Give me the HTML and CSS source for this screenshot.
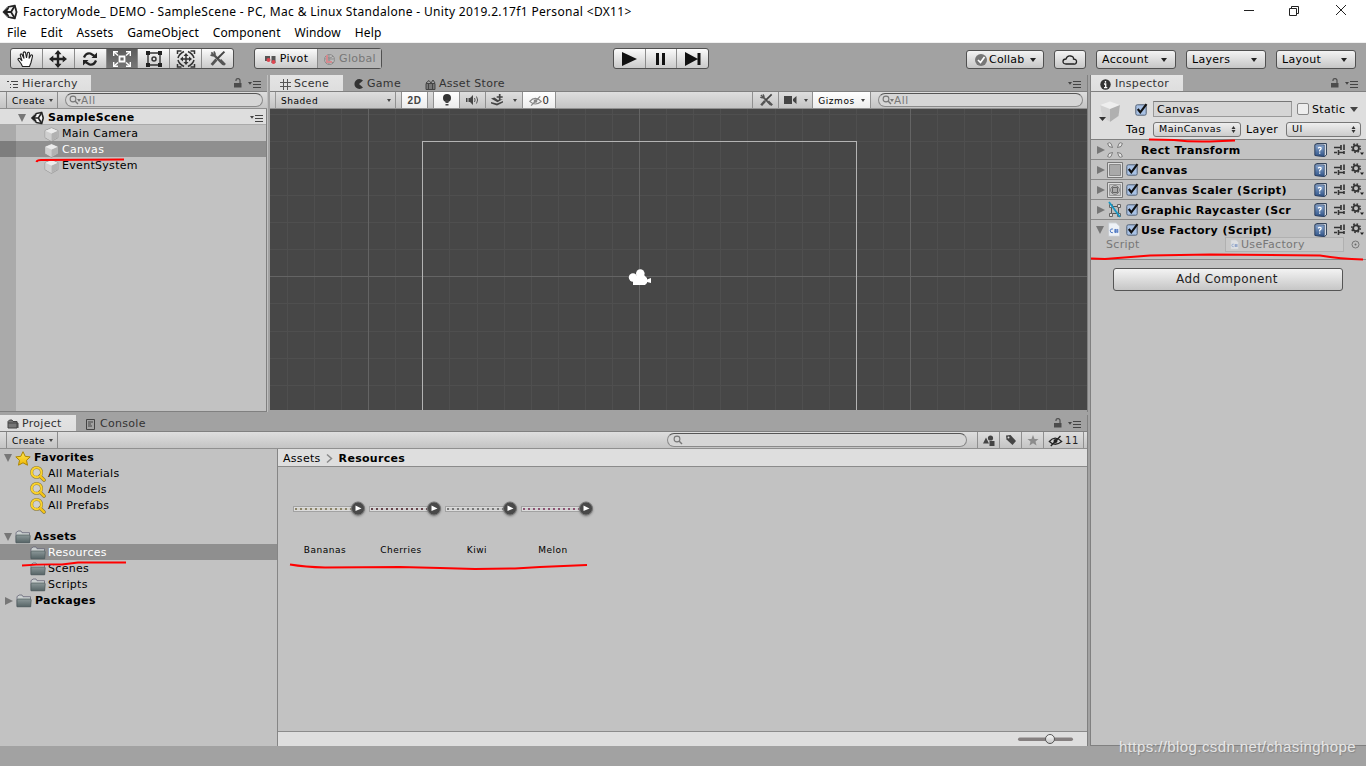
FILE: index.html
```html
<!DOCTYPE html>
<html lang="en">
<head>
<meta charset="utf-8">
<title>FactoryMode_ DEMO - SampleScene</title>
<link rel="stylesheet" href="styles.css">
</head>
<body>

<!-- shared icons -->
<svg class="sprite">
  <defs>
    <linearGradient id="yellow" x2="0" y2="1"><stop stop-color="#ffea58"/><stop offset="1" stop-color="#f0b500"/></linearGradient>
    <linearGradient id="slate" x2="0" y2="1"><stop stop-color="#8c9899"/><stop offset="1" stop-color="#566466"/></linearGradient>
    <linearGradient id="blue" x2="0" y2="1"><stop stop-color="#8aa7cf"/><stop offset="1" stop-color="#2f5387"/></linearGradient>
    <linearGradient id="knob" x2="0" y2="1"><stop stop-color="#fafafa"/><stop offset="1" stop-color="#c4c4c4"/></linearGradient>
  </defs>
  <symbol id="unity" viewBox="0 0 16 16"><path d="M1 8 5 3 13 1 15 8 13 15 5 13z" fill="#f4f4f4" stroke="#555" stroke-width=".6"/><path d="M6 3 12.800 1.700 14.500 8 12.800 14.300 6 13" fill="none" stroke="#222" stroke-width="1.700"/><path d="M3.500 8H9L12.500 2.300M9 8 12.500 13.700" fill="none" stroke="#222" stroke-width="1.800"/><path d="M.5 8 6.500 2.500 7 4.500 4.700 8 7 11.500 6.500 13.500z" fill="#222"/></symbol>
  <symbol id="cube" viewBox="0 0 14 14"><path d="M7 .8 13 3.3V10L7 13.4 1 10V3.3z" fill="#d9d9d9" stroke="#8f8f8f" stroke-width=".7"/><path d="M1.3 3.5 7 6V13L1.3 9.8z" fill="#cfcfcf"/><path d="M7 6 12.7 3.5V9.8L7 13z" fill="#b2b2b2"/><path d="M1.3 3.5 7 6 12.7 3.5 7 1.2z" fill="#ececec"/></symbol>
  <symbol id="lock" viewBox="0 0 8 10"><path d="M0 5h7.5v4.5H0z" fill="#4c4c4c"/><path d="M2 3V2Q2 .7 4 .7T6 2.4V5" fill="none" stroke="#4c4c4c" stroke-width="1.2"/></symbol>
  <symbol id="menu" viewBox="0 0 13 8"><path d="M0 2h4L2 4.7z" fill="#444"/><path d="M5 1.5h8M5 4.5h8M5 7.5h8" stroke="#444"/></symbol>
  <symbol id="glass" viewBox="0 0 12 10"><circle cx="4" cy="4" r="2.9" fill="none" stroke="#777" stroke-width="1.1"/><path d="M6 6 9 9" stroke="#777" stroke-width="1.4"/></symbol>
  <symbol id="find" viewBox="0 0 16 16"><circle cx="6.6" cy="6.4" r="4.9" fill="#ddd" fill-opacity=".5" stroke="#8a7838" stroke-width="3"/><path d="M10 10 14 14" stroke="#8a7838" stroke-width="3.6" stroke-linecap="round"/><circle cx="6.6" cy="6.4" r="4.9" fill="none" stroke="#fbd32c" stroke-width="2.1"/><path d="M10 10 14 14" stroke="#f6c517" stroke-width="2.4" stroke-linecap="round"/></symbol>
  <symbol id="folder" viewBox="0 0 16 14"><path d="M1 12.5V3Q1 2 2 2L3 1H6L7 2.7H14.500V5V12.5z" fill="#cbd0d0" stroke="#667" stroke-width=".8"/><path d="M1 12.8V6Q1 5 2 5H14.500Q15.200 5 15.200 6L14.700 12.800z" fill="url(#slate)" stroke="#4f5b5d" stroke-width=".7"/></symbol>
  <symbol id="tools" viewBox="0 0 16 16"><path d="M2.200 2.200 4.500 4.500M4.500 1.500Q6.500 4 5 5T1.500 4.500" fill="none" stroke="#555" stroke-width="1.600"/><path d="M5 5 13.500 13.500" stroke="#555" stroke-width="2.200"/><path d="M14.500 1.500 7.500 8.500" stroke="#444" stroke-width="1.900"/><path d="M7 9 2.500 14" stroke="#555" stroke-width="2.800"/><path d="M10.500 9.500 15 14" stroke="#555" stroke-width="2.600"/></symbol>
  <symbol id="eye" viewBox="0 0 14 12"><path d="M.8 6.5Q6.5-.2 13.2 6.5 6.5 12 .8 6.5z" fill="none" stroke="currentColor" stroke-width="1.2"/><circle cx="7" cy="6" r="2" fill="currentColor"/><path d="M2.3 11 12 1" stroke="currentColor" stroke-width="1.4"/></symbol>
  <symbol id="book" viewBox="0 0 13 14"><path d="M1 1.500 3 .6H12.400V12L10.500 13.500 1 12.500z" fill="#e9eef5" stroke="#26374f"/><path d="M1 1.700 10.300 2V13.400L1 12.400z" fill="url(#blue)" stroke="#2c4163" stroke-width=".7"/><path d="M4 5.300Q5.700 3.500 7.200 5 7.400 6.200 5.700 7.200V8.400M5.700 9.500v1.300" fill="none" stroke="#fff" stroke-width="1.200"/></symbol>
  <symbol id="preset" viewBox="0 0 11 12"><path d="M0 3.500H7M0 8.500H3M5 8.500H10M7 1v5M4.500 6v5M10 .5v5.500M10 7v3" fill="none" stroke="#333" stroke-width="1.600"/></symbol>
  <symbol id="gear" viewBox="0 0 13 13"><circle cx="5" cy="5.200" r="2.900" fill="none" stroke="#333" stroke-width="1.800"/><circle cx="5" cy="5.200" r="4.300" fill="none" stroke="#333" stroke-width="1.500" stroke-dasharray="1.600 1.780"/><path d="M9 9.500h4L11 12z" fill="#222"/></symbol>
  <symbol id="cs" viewBox="0 0 12 14"><path d="M1 .8H8L11.3 4V13.3H1z" fill="#edf1f6" stroke="#c2c7cc" stroke-width=".7"/><path d="M5 6.500Q2.500 6 2.500 8.200T5 10M6 7.500H10.200M6 9.200H10.200M7.300 6.500v3.800M9 6.500v3.800" fill="none" stroke="#4a75c2" stroke-width=".9"/></symbol>
  <symbol id="check" viewBox="0 0 13 13"><rect x=".8" y="1.8" width="10.4" height="10.4" rx="1.5" fill="#a8c1e4" stroke="#536276"/><path d="M2.8 6 5.300 9.300 11.500 1.200" fill="none" stroke="#111" stroke-width="2.200"/></symbol>
</svg>

<div class="titlebar">
  <svg class="logo" width="16" height="16"><use href="#unity"/></svg>
  <span class="title">FactoryMode_ DEMO - SampleScene - PC, Mac &amp; Linux Standalone - Unity 2019.2.17f1 Personal &lt;DX11&gt;</span>
  <svg class="window-buttons" width="112" height="14"><path d="M2 5.500h10M47.500 3.500h7v7h-7zM49.500 3.500v-2h7v7h-2M94 0l10 10M104 0l-10 10" fill="none" stroke="#222"/></svg>
</div>

<div class="menubar">
  <span>File</span><span>Edit</span><span>Assets</span><span>GameObject</span><span>Component</span><span>Window</span><span>Help</span>
</div>

<div class="toolbar">
  <div class="group tools">
    <span><svg width="18" height="18"><path d="M5.500 16.500 4 13.500 1 9.500Q1 8 2.800 8.500L5 11 3.200 5Q3.500 3.200 5 4.400L7 8.500 6.200 3Q7 1 8.500 2.500L9.500 8 10.500 2.700Q12 1.500 12.500 3.500L12 8.500 14 5Q15.800 4.500 15.500 6.500L14 12.500 12.500 16.500z" fill="#fff" stroke="#222" stroke-width="1.100"/></svg></span>
    <span><svg width="18" height="18"><path d="M9 2v14M2 9h14" stroke="#222" stroke-width="2.400"/><path d="M9 0 12.500 4.300H5.500zM9 18 5.500 13.700H12.500zM0 9 4.300 5.500V12.500zM18 9 13.700 12.500V5.500z" fill="#222"/></svg></span>
    <span><svg width="18" height="18"><path d="M3 7.500Q5 2.500 9.500 3.500L13.500 6M15 10.500Q13 15.500 8.500 14.500L4.500 12" fill="none" stroke="#222" stroke-width="2.300"/><path d="M10.500 8H16V2.500zM7.500 10H2V15.500z" fill="#222"/></svg></span>
    <span class="on"><svg width="20" height="18"><path d="M7.500 6.500h5v5h-5z" fill="none" stroke="#fff" stroke-width="1.800"/><path d="M2 2 6 5.500M18 2 14 5.500M2 16 6 12.500M18 16 14 12.500" stroke="#fff" stroke-width="1.500"/><path d="M1.700 6V1.700H6M14 1.700h4.300V6M1.700 12v4.300H6M14 16.300h4.300V12" fill="none" stroke="#fff" stroke-width="1.400"/></svg></span>
    <span><svg width="18" height="18"><path d="M3 3h12v12H3z" fill="none" stroke="#333" stroke-width="1.400"/><path d="M1 1h4v4H1zM13 1h4v4h-4zM1 13h4v4H1zM13 13h4v4h-4z" fill="#222"/><circle cx="9" cy="9" r="2" fill="none" stroke="#333" stroke-width="1.500"/></svg></span>
    <span><svg width="20" height="18"><path d="M10 5v8M6 9h8" stroke="#333" stroke-width="1.500"/><path d="M10 3 12.500 6H7.500zM10 15 7.500 12H12.500zM4 9 7 6.500V11.500zM16 9 13 11.500V6.500z" fill="#333"/><path d="M1.500 4V1h4M2 8Q3 4 8 1.500M14.500 1h4v3M18 8Q17 4 12 1.500M1.500 14v3h4M2 10Q3 14 8 16.500M14.500 17h4v-3M18 10Q17 14 12 16.500" fill="none" stroke="#333" stroke-width="1.500"/></svg></span>
    <span><svg width="17" height="17"><use href="#tools"/></svg></span>
  </div>
  <div class="group pivot">
    <span><svg width="13" height="11"><path d="M1 2h5v5H1zM7.500 2h4v7h-4z" fill="#555"/><circle cx="4.500" cy="6" r="2" fill="#dd4550"/><circle cx="9.500" cy="8" r="2" fill="#dd4550"/></svg>Pivot</span>
    <span class="dim"><svg width="13" height="13"><circle cx="6.500" cy="6.500" r="5" fill="#bcbcbc" stroke="#8b8b8b"/><path d="M6 1.500v10M2 6h9M3 3Q6.500 7 10 3M3 10Q6.500 6 10 10" fill="none" stroke="#8b8b8b"/><path d="M4 2v7h5" fill="none" stroke="#d58a8f" stroke-width="2"/></svg>Global</span>
  </div>
  <div class="group play">
    <span><svg width="16" height="14"><path d="M1 0 16 7 1 14z" fill="#111"/></svg></span>
    <span><svg width="10" height="14"><path d="M0 1h3v12H0zM6 1h3v12H6z" fill="#111"/></svg></span>
    <span><svg width="16" height="14"><path d="M0 0 13 7 0 14zM12.500 1h3v12h-3z" fill="#111"/></svg></span>
  </div>
  <div class="services">
    <span class="btn collab"><svg width="12" height="12"><circle cx="6" cy="6" r="6" fill="#777"/><path d="M3 6 5.500 8.500 9.500 3" fill="none" stroke="#fff" stroke-width="1.700"/></svg>Collab<i class="down"></i></span>
    <span class="btn cloud"><svg width="16" height="12"><path d="M4 10Q1 10 1 7.500T4 5Q5 1.500 8.500 2T11.500 5Q15 5.500 14.500 8T12 10z" fill="none" stroke="#222" stroke-width="1.300"/></svg></span>
    <span class="btn drop account">Account<i class="down"></i></span>
    <span class="btn drop">Layers<i class="down"></i></span>
    <span class="btn drop last">Layout<i class="down"></i></span>
  </div>
</div>

<div class="workspace">
  <div class="main">
    <div class="upper">

      <div class="panel hierarchy">
        <div class="tabs">
          <span class="tab active"><svg width="12" height="9"><path d="M0 1.500h2M4 1.500h7M3 4.500h1M6 4.500h5M3 7.500h1M6 7.500h5" stroke="#444"/></svg>Hierarchy</span>
          <svg class="lock" width="8" height="10"><use href="#lock"/></svg>
          <svg class="menu" width="13" height="8"><use href="#menu"/></svg>
        </div>
        <div class="bar">
          <span class="create">Create<i class="down small"></i></span>
          <span class="search"><svg width="12" height="10"><use href="#glass"/></svg><i class="down small"></i>All</span>
        </div>
        <div class="tree">
          <div class="row scene-row"><i class="fold open"></i><svg width="15" height="14"><use href="#unity"/></svg><b>SampleScene</b><svg class="menu" width="13" height="8"><use href="#menu"/></svg></div>
          <div class="row object"><svg width="15" height="15"><use href="#cube"/></svg>Main Camera</div>
          <div class="row object selected"><svg width="15" height="15"><use href="#cube"/></svg>Canvas</div>
          <div class="row object"><svg width="15" height="15"><use href="#cube"/></svg>EventSystem</div>
          <div class="gutter"></div>
        </div>
      </div>

      <div class="panel scene">
        <div class="tabs">
          <span class="tab active"><svg width="11" height="11"><path d="M3.500 0v11M7.500 0v11M0 3.500h11M0 7.500h11" stroke="#555"/></svg>Scene</span>
          <span class="tab game"><svg width="10" height="10"><path d="M9 1.500A5 5 0 1 0 9 8.500L5 5z" fill="#333"/></svg>Game</span>
          <span class="tab store"><svg width="11" height="11"><path d="M1 4.500h9V10.500H1z" fill="#777" stroke="#444"/><path d="M1 4 4 1.500 6 4 8 1 10 4M3.500 4.500v6M7.500 4.500v6" fill="none" stroke="#444"/></svg>Asset Store</span>
          <svg class="menu alone" width="13" height="8"><use href="#menu"/></svg>
        </div>
        <div class="bar">
          <span class="cell shaded">Shaded<i class="down small"></i></span>
          <span class="cell lit two-d">2D</span>
          <span class="cell lit light"><svg width="10" height="12"><circle cx="5" cy="4" r="4" fill="#333"/><path d="M3.500 6h3v3h-3zM3.500 10h3v1.500h-3z" fill="#444"/></svg></span>
          <span class="cell audio"><svg width="13" height="10"><path d="M0 3h1.500v4H0zM2.500 3H4L7 0V10L4 7H2.500z" fill="#444"/><path d="M8.500 3Q9.700 5 8.500 7M10.500 1.500Q12.700 5 10.500 8.500" fill="none" stroke="#555"/></svg></span>
          <span class="cell fx"><svg width="13" height="12"><path d="M0 4.500 3.500 3.500 7 6 12 5 6.500 8.200zM0 8 6 9.500 12 7V8.500L6 11.500 0 9.500z" fill="#444"/><path d="M8.700 0V6M5.700 3H11.700" stroke="#444" stroke-width="1.700"/></svg><i class="down small"></i></span>
          <span class="cell lit hidden"><svg width="13" height="12"><use href="#eye"/></svg>0</span>
          <span class="cell wrench"><svg width="14" height="14"><use href="#tools"/></svg></span>
          <span class="cell camera"><svg width="13" height="10"><path d="M0 1h8v8H0zM9 4 12.500 1V9L9 6z" fill="#444"/></svg><i class="down small"></i></span>
          <span class="cell lit gizmos">Gizmos<i class="down small"></i></span>
          <span class="search"><svg width="12" height="10"><use href="#glass"/></svg><i class="down small"></i>All</span>
        </div>
        <svg class="view" width="817" height="301">
          <g shape-rendering="crispEdges" fill="none">
            <path stroke="#4f4f4f" d="M17.500 0v301M44.500 0v301M71.500 0v301M125.500 0v301M152.500 0v301M179.500 0v301M207.500 0v301M234.500 0v301M261.500 0v301M288.500 0v301M315.500 0v301M342.500 0v301M396.500 0v301M423.500 0v301M450.500 0v301M477.500 0v301M505.500 0v301M532.500 0v301M559.500 0v301M586.500 0v301M613.500 0v301M667.500 0v301M694.500 0v301M721.500 0v301M749.500 0v301M776.500 0v301M803.500 0v301M0 5.500h817M0 32.500h817M0 59.500h817M0 86.500h817M0 113.500h817M0 140.500h817M0 194.500h817M0 222.500h817M0 249.500h817M0 276.500h817"/>
            <path stroke="#646464" d="M98.500 0v301M369.500 0v301M640.500 0v301M0 167.500h817"/>
            <path stroke="#b4b4b4" d="M152.500 301V32.500H586.500V301"/>
          </g>
          <g fill="#fff"><circle cx="363" cy="168.500" r="4.200"/><circle cx="370.300" cy="164.500" r="4.300"/><path d="M363 167 374 166 377 169V170.500L381 169V174L377 173V174L375 176H363z"/></g>
        </svg>
      </div>
    </div>

    <div class="panel project">
      <div class="tabs">
        <span class="tab active"><svg width="12" height="10"><path d="M1 9V2.500L2.500 1H5L6 2.500H10V9zM1 4H11V9" fill="#777" stroke="#444"/></svg>Project</span>
        <span class="tab console"><svg width="10" height="11"><path d="M.5.500H8.500V10.500H.5zM2 3h5M2 5h3M2 7h4" fill="none" stroke="#444"/></svg>Console</span>
        <svg class="lock" width="8" height="10"><use href="#lock"/></svg>
        <svg class="menu" width="13" height="8"><use href="#menu"/></svg>
      </div>
      <div class="bar">
        <span class="create">Create<i class="down small"></i></span>
        <span class="search"><svg width="12" height="10"><use href="#glass"/></svg></span>
        <span class="cell"><svg width="12" height="11"><path d="M0 8.500 3 2.500 6 8.500zM6.500 6h5v5h-5z" fill="#444"/><circle cx="7.500" cy="3" r="2.600" fill="#444"/></svg></span>
        <span class="cell"><svg width="12" height="12"><path d="M1 1.500 5.500 1 11 7 7.500 11 1.500 5.500z" fill="#444"/><circle cx="3.500" cy="3.500" r="1" fill="#ddd"/></svg></span>
        <span class="cell"><svg width="12" height="11"><path d="M6 0 7.500 4H11.500L8.500 6.500 9.500 10.500 6 8.200 2.500 10.500 3.500 6.500 .5 4H4.500z" fill="#8c8c8c"/></svg></span>
        <span class="cell eleven"><svg width="15" height="12"><use href="#eye"/></svg>11</span>
      </div>
      <div class="browser">
        <div class="folders">
          <div class="row top"><i class="fold open"></i><svg width="16" height="15"><path d="M8 .7 10.200 5.300 15.200 5.900 11.500 9.300 12.500 14.200 8 11.800 3.500 14.200 4.500 9.300 .8 5.900 5.800 5.300z" fill="url(#yellow)" stroke="#ad8600"/></svg><b>Favorites</b></div>
          <div class="row"><svg width="16" height="16"><use href="#find"/></svg>All Materials</div>
          <div class="row"><svg width="16" height="16"><use href="#find"/></svg>All Models</div>
          <div class="row"><svg width="16" height="16"><use href="#find"/></svg>All Prefabs</div>
          <div class="row top second"><i class="fold open"></i><svg width="16" height="14"><use href="#folder"/></svg><b>Assets</b></div>
          <div class="row selected"><svg width="16" height="14"><use href="#folder"/></svg>Resources</div>
          <div class="row"><svg width="16" height="14"><use href="#folder"/></svg>Scenes</div>
          <div class="row"><svg width="16" height="14"><use href="#folder"/></svg>Scripts</div>
          <div class="row top"><i class="fold"></i><svg width="16" height="14"><use href="#folder"/></svg><b>Packages</b></div>
        </div>
        <div class="content">
          <div class="crumbs">Assets<svg width="7" height="9"><path d="M1 .5 5.500 4.500 1 8.500" fill="none" stroke="#888" stroke-width="1.500"/></svg><b>Resources</b></div>
          <div class="assets">
            <div class="asset bananas"><div class="strip"><i></i><svg width="16" height="17"><circle cx="8" cy="8.500" r="6.500" fill="#494949" stroke="#777"/><path d="M5.500 5.500 11.500 8.500 5.500 11z" fill="#fff"/></svg></div>Bananas</div>
            <div class="asset cherries"><div class="strip"><i></i><svg width="16" height="17"><circle cx="8" cy="8.500" r="6.500" fill="#494949" stroke="#777"/><path d="M5.500 5.500 11.500 8.500 5.500 11z" fill="#fff"/></svg></div>Cherries</div>
            <div class="asset kiwi"><div class="strip"><i></i><svg width="16" height="17"><circle cx="8" cy="8.500" r="6.500" fill="#494949" stroke="#777"/><path d="M5.500 5.500 11.500 8.500 5.500 11z" fill="#fff"/></svg></div>Kiwi</div>
            <div class="asset melon"><div class="strip"><i></i><svg width="16" height="17"><circle cx="8" cy="8.500" r="6.500" fill="#494949" stroke="#777"/><path d="M5.500 5.500 11.500 8.500 5.500 11z" fill="#fff"/></svg></div>Melon</div>
          </div>
          <div class="slider"><svg width="56" height="12"><rect x="0" y="4.500" width="55" height="3.500" rx="1.700" fill="#858080"/><circle cx="32" cy="6" r="4.500" fill="url(#knob)" stroke="#555"/></svg></div>
        </div>
      </div>
    </div>
  </div>

  <div class="panel inspector">
    <div class="tabs">
      <span class="tab active"><svg width="11" height="11"><circle cx="5.500" cy="5.500" r="5.200" fill="#333"/><path d="M5.500 2v1.700M4 5h1.700v3.500M4 8.600h3.300" fill="none" stroke="#fff" stroke-width="1.300"/></svg>Inspector</span>
      <svg class="lock" width="8" height="10"><use href="#lock"/></svg>
      <svg class="menu" width="13" height="8"><use href="#menu"/></svg>
    </div>
    <div class="object-head">
      <svg class="big-cube" width="24" height="24"><path d="M2 4 12 .5 22 4 20 15 12 21 4 15z" fill="#eee"/><path d="M2 4 12 8V21L4 15.500z" fill="#d2d2d2"/><path d="M12 8 22 4 20.500 15 12 21z" fill="#b0b0b0"/><path d="M1 16h7L4.500 20z" fill="#333"/></svg>
      <div class="fields">
        <div class="line"><svg width="13" height="13"><use href="#check"/></svg><span class="name">Canvas</span><i class="box"></i><span class="static">Static</span><i class="down large"></i></div>
        <div class="line second"><span class="tag-label">Tag</span><span class="popup tag">MainCanvas<svg width="5" height="7"><path d="M.5 3 2.500 0 4.500 3zM.5 4 2.500 7 4.500 4z" fill="#333"/></svg></span><span class="layer-label">Layer</span><span class="popup layer">UI<svg width="5" height="7"><path d="M.5 3 2.500 0 4.500 3zM.5 4 2.500 7 4.500 4z" fill="#333"/></svg></span></div>
      </div>
    </div>
    <div class="component"><i class="fold"></i>
      <svg class="kind" width="16" height="16"><path d="M.6 1.500Q2.500 0 4 1.500L5.500 5.500 2 4.500zM15.400 1.500Q13.500 0 12 1.500L10.500 5.500 14 4.500zM.6 14.500Q2.500 16 4 14.500L5.500 10.500 2 11.500zM15.400 14.500Q13.500 16 12 14.500L10.500 10.500 14 11.500z" fill="#e6e6e6" stroke="#666" stroke-width=".8"/></svg>
      <b class="no-check">Rect Transform</b><svg class="book" width="13" height="14"><use href="#book"/></svg><svg class="preset" width="11" height="12"><use href="#preset"/></svg><svg width="13" height="13"><use href="#gear"/></svg></div>
    <div class="component"><i class="fold"></i>
      <svg class="kind" width="16" height="16"><path d="M.5.500h15v15H.5z" fill="#ddd" stroke="#777"/><path d="M2.500 2.500h11v11h-11z" fill="#a9a9a9" stroke="#888"/></svg>
      <svg class="tick" width="13" height="13"><use href="#check"/></svg><b>Canvas</b><svg class="book" width="13" height="14"><use href="#book"/></svg><svg class="preset" width="11" height="12"><use href="#preset"/></svg><svg width="13" height="13"><use href="#gear"/></svg></div>
    <div class="component"><i class="fold"></i>
      <svg class="kind" width="16" height="16"><path d="M.5.500h15v15H.5z" fill="#ddd" stroke="#777"/><path d="M2.500 2.500h11v11h-11z" fill="#c4c4c4" stroke="#999"/><circle cx="8" cy="8" r="4.300" fill="#ccc" stroke="#777"/><path d="M5.500 5.500h5v5h-5z" fill="#aaa" stroke="#666"/></svg>
      <svg class="tick" width="13" height="13"><use href="#check"/></svg><b>Canvas Scaler (Script)</b><svg class="book" width="13" height="14"><use href="#book"/></svg><svg class="preset" width="11" height="12"><use href="#preset"/></svg><svg width="13" height="13"><use href="#gear"/></svg></div>
    <div class="component"><i class="fold"></i>
      <svg class="kind" width="16" height="16"><path d="M4.500 4.500h7v7h-7z" fill="#bbb" stroke="#555"/><path d="M2.500 2.500h3v3h-3zM10.500 2.500h3v3h-3zM2.500 11.500h3v3h-3zM10.500 11.500h3v3h-3z" fill="#ddd" stroke="#666"/><path d="M2 0 13 15" stroke="#1697c4" stroke-width="1.800"/></svg>
      <svg class="tick" width="13" height="13"><use href="#check"/></svg><b>Graphic Raycaster (Scr</b><svg class="book" width="13" height="14"><use href="#book"/></svg><svg class="preset" width="11" height="12"><use href="#preset"/></svg><svg width="13" height="13"><use href="#gear"/></svg></div>
    <div class="component last"><i class="fold open"></i>
      <svg class="kind" width="16" height="15"><use href="#cs"/></svg>
      <svg class="tick" width="13" height="13"><use href="#check"/></svg><b>Use Factory (Script)</b><svg class="book" width="13" height="14"><use href="#book"/></svg><svg class="preset" width="11" height="12"><use href="#preset"/></svg><svg width="13" height="13"><use href="#gear"/></svg></div>
    <div class="script-row"><span>Script</span><span class="script-file"><svg width="9" height="11"><use href="#cs"/></svg>UseFactory</span><svg width="9" height="9"><circle cx="4.500" cy="4.500" r="3.500" fill="none" stroke="#777"/><circle cx="4.500" cy="4.500" r="1" fill="#666"/></svg></div>
    <div class="add">Add Component</div>
  </div>
</div>

<div class="status"></div>
<div class="watermark">https://blog.csdn.net/chasinghope</div>

<!-- red pen marks -->
<svg class="marks" width="1366" height="766">
  <path d="M36.500 162Q37 160 41 160L124 159.500"/>
  <path d="M22 565.500Q42 564 62 564.500L78 562.500 126 562.500"/>
  <path d="M290 564.500Q305 567 325 567.500L400 567 440 568 475 569 515 568.500 540 567 587 565"/>
  <path d="M1149 139.500 1174 140Q1190 142 1210 141.500L1235 140.500"/>
  <path d="M1091 258.500 1105 259Q1130 257 1150 255.500L1210 254.500 1320 255.500Q1340 259 1363 259.500"/>
</svg>

</body>
</html>
```

FILE: styles.css
```css
* {box-sizing: border-box}

body {
  margin: 0;
  width: 1366px;
  height: 766px;
  overflow: hidden;
  display: flex;
  flex-direction: column;
  background: #a2a2a2;
  color: #000;
  font-family: "DejaVu Sans", Verdana, sans-serif;
  font-size: 11px;
  letter-spacing: .3px;
  line-height: 16px;
  white-space: nowrap;
}
svg {flex: none; overflow: visible}
i {flex: none}
.sprite {position: absolute; width: 0; height: 0}

/* title and menu */
.titlebar, .menubar {
  display: flex;
  align-items: center;
  background: #fff;
  font-family: "Noto Sans", "Open Sans", sans-serif;
  font-size: 12px;
  letter-spacing: 0;
}
.titlebar {height: 23px; padding-left: 2px}
.title {margin-left: 5px; letter-spacing: .33px}
.window-buttons {margin-left: auto; margin-right: 12px}
.menubar {height: 20px; padding-left: 7px; gap: 13.800px; letter-spacing: .15px; border-bottom: 1px solid #f0f0f0}

/* main toolbar */
.toolbar {height: 32px; display: flex; align-items: center; padding: 0 0 1px 10px; flex: none}
.group, .btn {
  display: flex;
  height: 21px;
  border: 1px solid #505050;
  border-radius: 3px;
  background: linear-gradient(#fafafa, #cacaca);
}
.group span {display: flex; align-items: center; justify-content: center; border-right: 1px solid #8b8b8b}
.group span:last-child {border-right: none}
.tools {width: 224px}
.tools span {flex: 1}
.tools .on {background: linear-gradient(#5b5b5b, #777)}
.pivot {margin-left: 20px; width: 128px}
.pivot span {width: 64px; gap: 3px; padding-top: 1px}
.pivot .dim {background: #b5b5b5; color: #777}
.play {margin-left: 231px; width: 96px}
.play span {flex: 1}
.services {display: flex; margin-left: auto; padding: 1px 10px 0 0}
.btn {height: 19px; align-items: center; padding: 1px 7px 0 5px; background: linear-gradient(#f3f3f3, #c6c6c6)}
.down {border: 3px solid transparent; border-top: 4px solid #222; border-bottom: 0}
.down.small {border-width: 3px 2.500px 0; border-top-color: #444}
.down.large {border-width: 5px 4.500px 0; border-top-color: #444}
.collab {width: 78px; gap: 2px; padding-left: 8px; letter-spacing: .2px}
.collab .down {margin-left: auto}
.cloud {width: 32px; margin: 0 10px; padding-left: 7px}
.drop {width: 80px; justify-content: space-between; margin-right: 10px; padding-right: 8px}
.drop.last {margin-right: 0}

/* docked panels */
.workspace {height: 671px; display: flex; flex: none}
.main {width: 1088px; display: flex; flex-direction: column; gap: 3px}
.upper {height: 337px; display: flex; gap: 2px}
.panel {display: flex; flex-direction: column}
.tabs {height: 16px; display: flex; align-items: center; flex: none; color: #333}
.tab {display: flex; align-items: center; gap: 4px; height: 16px; padding-top: 2px}
.tab.active {background: linear-gradient(#e4e4e4, #dedede)}
.tabs .lock {margin-left: auto}
.tabs .menu {margin: 2px 6px 0 6px}
.tabs .alone {margin-left: auto}
.bar {
  height: 18px;
  flex: none;
  display: flex;
  align-items: center;
  border-top: 1px solid #808080;
  border-bottom: 1px solid #909090;
  background: linear-gradient(#dedede, #c4c4c4);
  font-size: 9px;
  letter-spacing: .55px;
}
.create {height: 16px; display: flex; align-items: center; gap: 4px; padding: 1px 3px 0 5px; margin-left: 6px; border: solid #8b8b8b; border-width: 0 1px; width: 52px}
.search {
  height: 14px;
  display: flex;
  align-items: center;
  border: 1px solid #8a8a8a;
  border-top: 1px solid #555;
  border-radius: 7px;
  background: #d6d6d6;
  color: #777;
  font-size: 10.500px;
  padding-left: 3px;
}
.search .down {margin: 0 0 0 -4px; border-top-color: #777}
.row {height: 16px; display: flex; align-items: center; padding-top: 2px}
.row b, .component b {font-weight: bold}
.selected {background: #8f8f8f; color: #fff}
.fold {border: solid transparent; border-width: 4px 0 4px 8px; border-left-color: #777}
.fold.open {border-width: 8px 4.500px 0; border-color: #777 transparent transparent}

/* hierarchy */
.hierarchy {width: 268px; border-right: 1px solid #c0c0c0}
.hierarchy .active {width: 91px; padding-left: 7px; gap: 3px}
.hierarchy .search {width: 198px; margin-left: 7px}
.tree {flex: 1; background: #c2c2c2; position: relative; border: solid #808080; border-width: 0 1px 1px 0}
.scene-row {background: #dedede; border-bottom: 1px solid #aaa; padding: 2px 3px 0 18px}
.scene-row svg {margin: 0 3px 0 4px}
.scene-row .menu {margin: 0 0 0 auto}
.object {padding-left: 44px; gap: 3px}
.gutter {position: absolute; left: 0; top: 16px; bottom: 0; width: 16px; background: rgba(0, 0, 0, .12)}

/* scene */
.scene {width: 818px; border-right: 1px solid #808080}
.scene .tabs .active {width: 73px; padding-left: 10px; gap: 3px}
.game {padding-left: 11px; gap: 3px}
.store {padding-left: 24px; gap: 3px; letter-spacing: .3px}
.cell {height: 16px; display: flex; align-items: center; justify-content: center; border-right: 1px solid #909090}
.lit {background: linear-gradient(#fff, #ececec)}
.shaded {width: 121px; margin-left: 5px; padding: 1px 4px 0 5px; justify-content: space-between; border-left: 1px solid #999}
.two-d {width: 27px; margin-left: 5px; font: bold 10px "Liberation Sans", sans-serif; color: #444; border-left: 1px solid #909090}
.light {width: 27px; margin-left: 5px; border-left: 1px solid #909090}
.audio {width: 26px}
.fx {width: 37px; gap: 9px}
.hidden {width: 33px; gap: 1px; color: #222; font-size: 10px; padding-top: 1px}
.hidden svg {color: #888}
.wrench {width: 27px; margin-left: auto; border-left: 1px solid #909090}
.camera {width: 34px; gap: 7px}
.gizmos {width: 58px; gap: 6px; padding-top: 1px}
.scene .search {width: 205px; margin: 0 4px 0 7px}
.view {display: block; background: #474747}

/* project */
.project {flex: 1; border-right: 1px solid #808080}
.project .active {width: 76px; padding-left: 7px; gap: 3px}
.console {padding-left: 10px; gap: 4px}
.project .search {width: 300px; margin: 0 10px 0 auto; padding-left: 5px}
.project .cell {width: 22px; border: solid #909090; border-width: 0 0 0 1px; color: #444}
.project .eleven {width: 41px; margin-right: 3px; padding-top: 1px; border-right-width: 1px; gap: 2px; font-size: 10px; color: #222}
.browser {display: flex; flex: 1}
.folders {width: 278px; background: #c2c2c2; border-right: 1px solid #858585}
.folders .row {padding-left: 30px; gap: 2px}
.folders .top {padding-left: 4px}
.folders .top svg {margin-left: 1px}
.folders .top b {margin-left: 1px}
.folders .fold:not(.open) {margin-left: 1px}
.folders .second {margin-top: 15px}
.content {flex: 1; background: #c2c2c2; display: flex; flex-direction: column}
.crumbs {height: 18px; display: flex; align-items: center; padding: 2px 0 0 5px; background: #dedede; border-bottom: 1px solid #8b8b8b}
.crumbs svg {margin: 0 6px 0 5px}
.assets {display: flex; flex: 1; padding: 33px 0 0 9px}
.asset {width: 76px; text-align: center; font-size: 9px; letter-spacing: .5px}
.strip {display: flex; align-items: center; height: 17px; margin: 0 0 25px 7px}
.strip i {width: 62px; height: 4px; border: 1px solid #dcdcdc; outline: 1px solid #a2a2a2; background: repeating-linear-gradient(90deg, #777 0 2px, #ccc 2px 5px)}
.strip svg {margin-left: -6px; filter: drop-shadow(0 1px 1px #888)}
.bananas .strip i {background: repeating-linear-gradient(90deg, #8b8468 0 2px, #d2d0ca 2px 5px)}
.cherries .strip i {background: repeating-linear-gradient(90deg, #654249 0 2px, #ccc 2px 5px)}
.melon .strip i {background: repeating-linear-gradient(90deg, #8c5272 0 2px, #ccc 2px 5px)}
.slider {height: 15px; border-top: 1px solid #8b8b8b; background: #dedede; display: flex; align-items: center; justify-content: flex-end; padding-right: 13px}

/* inspector */
.inspector {width: 276px; margin-left: 2px; border-left: 1px solid #808080; background: #c2c2c2; border-bottom: 1px solid #808080}
.inspector .tabs {background: #a2a2a2}
.inspector .tabs .menu {margin-right: 8px}
.inspector .active {width: 92px; padding-left: 9px; gap: 4px}
.object-head {height: 49px; flex: none; display: flex; background: #dedede; border-top: 1px solid #808080; border-bottom: 1px solid #808080; padding: 9px 0 0 7px}
.fields {padding-left: 13px}
.line {display: flex; align-items: center; height: 16px}
.line .name {width: 139px; height: 16px; border: 1px solid #999; border-top-color: #777; background: #d5d5d5; padding-left: 3px; margin: 0 5px 0 5px; line-height: 15px}
.box {width: 12px; height: 12px; border: 1px solid #888; border-radius: 2px; background: #eee; margin-right: 3px}
.static {padding-top: 1px}
.line .large {margin-left: 5px}
.second.line {margin-top: 4px; margin-left: -9px; padding-top: 1px; height: 15px}
.tag-label {width: 27px; padding-top: 1px}
.popup {display: flex; align-items: center; justify-content: space-between; height: 15px; border: 1px solid #777; border-radius: 3px; background: linear-gradient(#eee, #ccc); font-size: 9.500px; letter-spacing: .5px; padding: 0 4px 0 5px}
.tag {width: 88px}
.layer-label {width: 45px; padding: 1px 0 0 5px}
.layer {width: 75px}
.component {height: 20px; flex: none; display: flex; align-items: center; padding-left: 6px; padding-right: 2px; border-bottom: 1px solid #888}
.component.last {border: none; height: 17px; padding-top: 2px}
.component .open {margin-left: -1px}
.component.last .kind {margin-left: 2px}
.kind {margin-left: 2px}
.component.last .tick {margin-left: 4px}
.tick {margin-left: 3px}
.component b {margin-left: 2px; padding-top: 2px; letter-spacing: .38px}
.component .no-check {margin-left: 18px}
.book {margin-left: auto}
.preset {margin: 0 6px 0 7px}
.script-row {height: 23px; flex: none; display: flex; align-items: flex-start; padding-left: 15px; color: #777; border-bottom: 1px solid #888}
.script-row > span:first-child {width: 119px}
.script-file {display: flex; align-items: center; width: 119px; height: 15px; border: 1px solid #b0b0b0; background: #c8c8c8; padding-left: 4px; gap: 2px}
.script-file svg {opacity: .6}
.script-row > svg {margin: 3px 0 0 7px}
.add {width: 230px; height: 23px; flex: none; margin: 8px 0 0 22px; padding-right: 2px; border: 1px solid #555; border-radius: 3px; background: linear-gradient(#f3f3f3, #c6c6c6); text-align: center; font-size: 12px; letter-spacing: .4px; line-height: 20px; color: #222}

.status {height: 20px; flex: none}
.watermark {position: absolute; left: 1119px; top: 738px; color: rgba(240, 240, 240, .9); font: 15px/18px "Liberation Sans", sans-serif; letter-spacing: .41px; text-shadow: 1px 1px 1px #888}
.marks {position: absolute; left: 0; top: 0; pointer-events: none}
.marks path {fill: none; stroke: #f00; stroke-width: 2}
```
